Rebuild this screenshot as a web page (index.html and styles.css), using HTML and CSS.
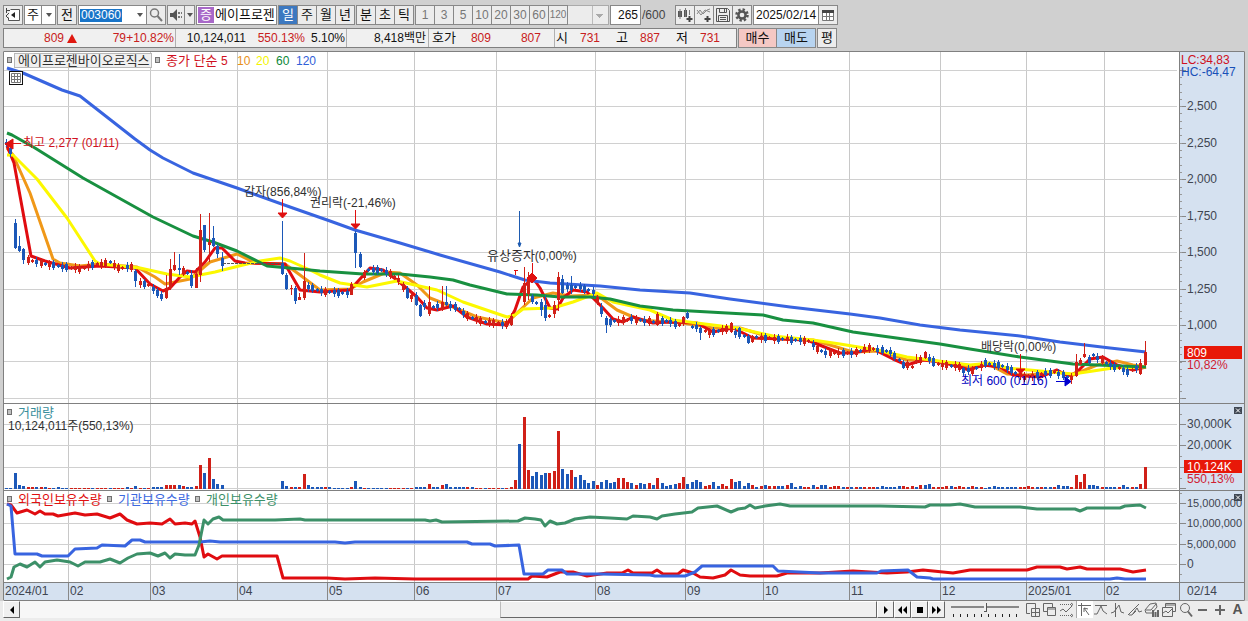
FILE: index.html
```html
<!DOCTYPE html>
<html lang="ko">
<head>
<meta charset="utf-8">
<title>에이프로젠바이오로직스 차트</title>
<link rel="stylesheet" href="styles.css">
</head>
<body>
<header class="toolbar">
  <button class="btn" aria-label="패널"><svg width="16" height="16" viewBox="0 0 16 16"><path d="M5.500 2.500h9v11h-11v-3" fill="#fff" stroke="#555"/><path d="M1 3.500h4M1.500 1v5M4 12l-3-3 3-3" stroke="#444" fill="none"/><path d="M10 5v6L6 8z" fill="#222"/></svg></button>
  <div class="group g-type"><button class="btn">주</button><button class="btn drop" aria-label="종류 선택"><i class="tri"></i></button></div>
  <button class="btn">전</button>
  <div class="group g-code">
    <input class="code" aria-label="종목코드" value="003060">
    <button class="btn drop flat" aria-label="종목 목록"><i class="tri"></i></button>
    <button class="btn" aria-label="검색"><svg width="16" height="16" viewBox="0 0 16 16"><circle cx="6.500" cy="6" r="4" fill="none" stroke="#777" stroke-width="1.500"/><path d="M9.500 9l4.500 5" stroke="#777" stroke-width="2"/></svg></button>
  </div>
  <div class="group g-sound"><button class="btn" aria-label="소리"><svg width="16" height="16" viewBox="0 0 16 16"><path d="M2 6h3l4-4v12l-4-4H2z" fill="#555"/><path d="M10 5h2v2h-2zM10 9h2v2h-2zM13 5h1v2h-1zM13 9h1v2h-1z" fill="#777"/></svg></button><button class="btn thin" aria-label="소리 설정"><i class="tri"></i></button></div>
  <div class="group g-name"><span class="tag">증</span><span class="name">에이프로젠</span></div>
  <div class="group g-cycle"><button class="btn on">일</button><button class="btn">주</button><button class="btn">월</button><button class="btn">년</button></div>
  <div class="group g-cycle"><button class="btn">분</button><button class="btn">초</button><button class="btn">틱</button></div>
  <div class="group g-min"><button class="btn">1</button><button class="btn">3</button><button class="btn">5</button><button class="btn">10</button><button class="btn">20</button><button class="btn">30</button><button class="btn">60</button><button class="btn small">120</button><select class="blank" aria-label="분 선택"><option></option></select></div>
  <div class="group g-count"><input class="count" aria-label="표시 개수" value="265"><span class="total">/600</span></div>
  <div class="group g-tools">
    <button class="btn" aria-label="차트 추가"><svg width="16" height="16" viewBox="0 0 16 16"><path d="M1 4h4v6H1zM7 3h3v7H7z" fill="#555"/><path d="M3 2v10M8.500 1v9M12.500 3v5" stroke="#777"/><path d="M12.500 9v6M9.500 12h6" stroke="#444" stroke-width="2"/></svg></button>
    <button class="btn" aria-label="지표 추가"><svg width="16" height="16" viewBox="0 0 16 16"><path d="M1 7l3-4 3 4 4-4 3-1M1 3l4 5 4-5 5 2" fill="none" stroke="#888"/><path d="M11.500 9v6M8.500 12h6" stroke="#444" stroke-width="2"/></svg></button>
    <button class="btn" aria-label="저장"><svg width="16" height="16" viewBox="0 0 16 16"><path d="M1.500 1.500h11l2 2v11h-13zM4.500 1.500v4h7v-4M3.500 14.500v-6h9v6M5 10.500h6M5 12.500h6M9.500 2v3" fill="none" stroke="#555"/></svg></button>
    <button class="btn" aria-label="설정"><svg width="16" height="16" viewBox="0 0 16 16"><circle cx="8" cy="8" r="5.500" fill="none" stroke="#555" stroke-width="2.500" stroke-dasharray="2.300 2"/><circle cx="8" cy="8" r="3.600" fill="none" stroke="#555" stroke-width="2.500"/></svg></button>
  </div>
  <div class="group g-date"><input class="date" aria-label="기준일" value="2025/02/14"><button class="btn" aria-label="달력"><svg width="14" height="14" viewBox="0 0 14 14"><path d="M1.500 2.500h11v10h-11zM1.500 8.500h11M5.500 5v7M8.500 5v7" fill="#fff" stroke="#777"/><path d="M1 2h12v3H1z" fill="#444"/></svg></button></div>
</header>

<section class="quote">
  <div class="quote-box">
    <div class="cell c-price red"><b class="n price">809</b><i class="up"></i><b class="n diff">79</b><b class="n rate">+10.82%</b></div>
    <div class="cell c-vol"><b class="n vol">10,124,011</b><b class="n red vrate">550.13%</b><b class="n turn">5.10%</b></div>
    <div class="cell c-amt"><b class="n">8,418백만</b></div>
    <div class="cell c-ask"><span>호가</span><b class="n red">809</b><b class="n red">807</b></div>
    <div class="cell c-ohl"><span>시</span><b class="n red">731</b><span>고</span><b class="n red">887</b><span>저</span><b class="n red">731</b></div>
  </div>
  <div class="group g-trade"><button class="btn buy">매수</button><button class="btn sell">매도</button></div>
  <button class="btn avg">평</button>
</section>

<main class="chart">
<svg class="plot" viewBox="3 51 1242 550">
  <rect x="3" y="51" width="1242" height="550" fill="#fff"/>
  <rect x="1180" y="52" width="64" height="548" class="axis-bg"/>
  <rect x="4" y="583" width="1240" height="17" class="axis-bg"/>
  <g id="grid"></g>
  <g id="volume" shape-rendering="crispEdges"></g>
  <g id="lines" fill="none"></g>
  <g id="candles" shape-rendering="crispEdges"></g>
  <g id="frame"></g>

  <g fill="#e01010" stroke="#e01010">
    <path d="M5 144l8-5v10z"/><path d="M13 143.500h8"/>
    <path d="M282.500 199v15"/><path d="M278 213h9l-4.500 5z"/>
    <path d="M355.500 210v16"/><path d="M351 224h9l-4.500 5z"/>
    <path d="M532.500 263v15"/><path d="M527 278l5-5 5 5-5 5z"/>
    <path d="M514 270.500h4M515.500 270v5"/>
    <path d="M1020.500 354v16"/><path d="M1016 369h9l-4.500 5z"/>
  </g>
  <g fill="#1e5bb0" stroke="#1e5bb0"><path d="M519.500 211v33"/><path d="M518 243h3l-1.500 4z"/></g>
  <g fill="#0000d0" stroke="#0000d0"><path d="M1056 381.500h9"/><path d="M1065 377v9l6-4.500z"/></g>

  <g class="mark"><rect x="7.500" y="57.500" width="4" height="5"/><rect x="155.500" y="57.500" width="4" height="5"/><rect x="7.500" y="409.500" width="4" height="5"/><rect x="7.500" y="496.500" width="4" height="5"/><rect x="107.500" y="496.500" width="4" height="5"/><rect x="195.500" y="496.500" width="4" height="5"/></g>
  <rect x="14.500" y="53.500" width="137" height="14" class="title-box"/>
  <g class="t">
    <text class="k" x="18" y="65">에이프로젠바이오로직스</text>
    <text class="k" x="166" y="65" fill="#d01020">종가 단순 <tspan class="d">5</tspan></text>
    <text x="237" y="65" fill="#e89018">10</text>
    <text x="256" y="65" fill="#f4f400">20</text>
    <text x="276" y="65" fill="#0c8838">60</text>
    <text x="296" y="65" fill="#3060d8">120</text>
    <text x="23" y="147" fill="#d01020">최고 2,277 (01/11)</text>
    <text x="244" y="196">감자(856,84%)</text>
    <text x="310" y="207">권리락(-21,46%)</text>
    <text x="487" y="260"><tspan class="k">유상증자</tspan>(0,00%)</text>
    <text x="981" y="351">배당락(0,00%)</text>
    <text x="961" y="385" fill="#0000c0">최저 600 (01/16)</text>
    <text class="k" x="18" y="417" fill="#3a8f9c">거래량</text>
    <text x="8" y="430">10,124,011주(550,13%)</text>
    <text class="k" x="18" y="504" fill="#e01010">외국인보유수량</text>
    <text class="k" x="118" y="504" fill="#3c68e0">기관보유수량</text>
    <text class="k" x="206" y="504" fill="#3c9068">개인보유수량</text>
  </g>
  <g class="t ax">
    <text x="1181" y="64" fill="#d01020">LC:34,83</text>
    <text x="1181" y="76" fill="#1850b8">HC:-64,47</text>
    <text x="1187" y="110">2,500</text><text x="1187" y="147">2,250</text><text x="1187" y="183">2,000</text><text x="1187" y="220">1,750</text><text x="1187" y="256">1,500</text><text x="1187" y="293">1,250</text><text x="1187" y="329">1,000</text>
    <rect x="1184" y="346" width="58" height="13" fill="#e81808"/><text x="1187" y="357" fill="#fff">809</text><text x="1187" y="369" fill="#d02030">10,82%</text>
    <text x="1187" y="428">30,000K</text><text x="1187" y="449">20,000K</text>
    <rect x="1184" y="460" width="58" height="13" fill="#e81808"/><text x="1187" y="471" fill="#fff">10,124K</text><text x="1187" y="483" fill="#d02030">550,13%</text>
    <text class="s" x="1187" y="507">15,000,000</text><text class="s" x="1187" y="527">10,000,000</text><text class="s" x="1187" y="548">5,000,000</text><text x="1187" y="568">0</text>
    <text x="5" y="595">2024/01</text><text x="70" y="595">02</text><text x="152" y="595">03</text><text x="239" y="595">04</text><text x="329" y="595">05</text><text x="416" y="595">06</text><text x="498" y="595">07</text><text x="597" y="595">08</text><text x="687" y="595">09</text><text x="765" y="595">10</text><text x="851" y="595">11</text><text x="942" y="595">12</text><text x="1028" y="595">2025/01</text><text x="1106" y="595">02</text><text x="1187" y="595">02/14</text>
  </g>
  <foreignObject x="9" y="71" width="14" height="14"><button class="grid-btn" aria-label="표 보기"><svg width="10" height="10" viewBox="0 0 10 10"><path d="M.5.5h9v9h-9zM0 3.500h10M0 6.500h10M3.500 0v10M6.500 0v10" fill="none" stroke="#777"/></svg></button></foreignObject>
  <foreignObject x="1234" y="407" width="8" height="7"><button class="close" aria-label="거래량 닫기"><svg width="8" height="7" viewBox="0 0 8 7"><path d="M2 1.500l4 4M6 1.500l-4 4" stroke="#fff"/></svg></button></foreignObject>
  <foreignObject x="1234" y="494" width="8" height="7"><button class="close" aria-label="보유수량 닫기"><svg width="8" height="7" viewBox="0 0 8 7"><path d="M2 1.500l4 4M6 1.500l-4 4" stroke="#fff"/></svg></button></foreignObject>
</svg>
</main>

<footer class="bottom">
  <button class="raised" aria-label="왼쪽으로"><svg width="8" height="8" viewBox="0 0 8 8"><path d="M6 0v8L2 4z"/></svg></button>
  <div class="track"><div class="thumb"></div></div>
  <div class="group play">
    <button class="raised" aria-label="오른쪽으로"><svg width="8" height="8" viewBox="0 0 8 8"><path d="M2 0v8l4-4z"/></svg></button>
    <button class="raised" aria-label="뒤로"><svg width="9" height="8" viewBox="0 0 9 8"><path d="M4 0v8L0 4zM9 0v8L5 4z"/></svg></button>
    <button class="raised" aria-label="정지"><svg width="8" height="8" viewBox="0 0 8 8"><path d="M1 1h6v6H1z"/></svg></button>
    <button class="raised" aria-label="앞으로"><svg width="9" height="8" viewBox="0 0 9 8"><path d="M0 0v8l4-4zM5 0v8l4-4z"/></svg></button>
  </div>
  <div class="speed"><input type="range" aria-label="속도" min="0" max="10" value="5"><div class="ticks"></div></div>
  <div class="tools">
    <button aria-label="창 추가"><svg viewBox="0 0 16 16"><path d="M5 11.500H1.500v-10h9V6M6.500 6.500h8v8h-8zM10.500 6v9M6 10.500h9"/></svg></button>
    <button aria-label="창 겹치기"><svg viewBox="0 0 16 16"><path d="M5 9.500H1.500v-8h9V5M5.500 5.500h8v8h-8zM6 7h8"/></svg></button>
    <button aria-label="영역"><svg viewBox="0 0 16 16"><path d="M1 2.500h11M1 13.500h11" stroke-dasharray="1 1"/><path d="M1 9l3-2 3 3 6-6M12 1l2 1.500L12 4M12 12l2 1.500-2 1.500"/></svg></button>
    <button class="sel" aria-label="십자선"><svg viewBox="0 0 16 16"><path d="M4.500 1v13M1 3.500h13M7 6l5 7M7 6v4M7 6l4 1"/></svg></button>
    <button aria-label="추세선"><svg viewBox="0 0 16 16"><path d="M2 3.500h12M1 12h3l4-8 2 5 4 3"/></svg></button>
    <button aria-label="세로선"><svg viewBox="0 0 16 16"><path d="M5.500 1v14M1 11l3-1 5-7 2 7 3 1"/></svg></button>
    <button aria-label="채널"><svg viewBox="0 0 16 16"><path d="M1 13l11-11M2 13h3l5-7 2 4 3-1M6 12l3-3"/></svg></button>
    <button aria-label="지우개"><svg viewBox="0 0 16 16"><path d="M1 8l5-6 6-1 1 4-5 6H2zM2 8h5l5-6"/><path d="M9 8v7M11.500 10v5M14 8v7" stroke-width="2"/></svg></button>
    <button aria-label="차트 묶음"><svg viewBox="0 0 16 16"><path d="M4.500 5V1.500h10v8H12M1.500 5.500h10v9h-10zM2 11l3-2 2 2 4-4M5 3h9"/></svg></button>
    <button aria-label="돋보기"><svg viewBox="0 0 16 16"><circle cx="7" cy="6" r="4.500"/><path d="M10 9.500l4 5" stroke-width="2"/></svg></button>
    <button aria-label="축소"><svg viewBox="0 0 16 16"><path d="M3 8h9" stroke-width="2"/></svg></button>
    <button aria-label="확대"><svg viewBox="0 0 16 16"><path d="M3 8h10M8 3v10" stroke-width="2"/></svg></button>
    <button class="letter">A</button>
  </div>
</footer>
<script src="chart.js"></script>
</body>
</html>
```
FILE: styles.css
```css
* { box-sizing: border-box; }
body {
  margin: 0;
  padding: 5px 3px 0;
  background: #d0d0d0;
  color: #111;
  font: 12px/16px "Liberation Sans", "Noto Sans CJK KR", sans-serif;
}
button, input, select { font: inherit; color: inherit; margin: 0; padding: 0; border-radius: 0; }
svg { display: block; }

.toolbar { display: flex; gap: 1px; height: 20px; white-space: nowrap; }
.group { display: flex; flex: none; }
.btn {
  display: flex; align-items: center; justify-content: center;
  flex: none; width: 20px; height: 20px; font-size: 13px;
  border: 1px solid #888; background: #ececec; overflow: hidden;
}
.group .btn + .btn { border-left: 0; width: 19px; }
.tri { border: 3px solid transparent; border-top: 4px solid #555; border-bottom: 0; }
.group .drop, .group .btn.drop { width: 14px; background: #fff; border-left: 0; }
.g-type { width: 32px; }
.g-type .btn:first-child { width: 18px; background: #fff; }
.g-code { width: 88px; }
.code { width: 55px; height: 20px; border: 1px solid #888; border-right: 0; background: linear-gradient(#1874c8, #1874c8) 1px 3px / 42px 13px no-repeat #fff; color: #fff; padding-left: 2px; }
.g-sound { width: 28px; }
.group .btn.thin { width: 10px; }
.g-sound .btn:first-child { width: 18px; }
.g-name { width: 81px; height: 20px; border: 1px solid #888; background: #fff; padding: 1px; overflow: hidden; font-size: 13px; line-height: 16px; }
.tag { width: 16px; height: 16px; background: #a868c8; color: #fff; text-align: center; margin-right: 1px; }
.g-cycle .on { background: #3c78c0; color: #fff; }
.g-min { color: #777; }
.g-min .btn { font-size: 12px; }
.g-min .small { font-size: 10px; }
.blank {
  appearance: none; width: 41px; height: 20px; border: 1px solid #aaa; border-left: 0;
  background: linear-gradient(225deg, #aaa 50%, transparent 50%) 28px 8px / 4px 4px no-repeat,
    linear-gradient(135deg, #aaa 50%, transparent 50%) 32px 8px / 4px 4px no-repeat,
    linear-gradient(#bbb, #bbb) 24px 0 / 1px 20px no-repeat #ececec;
}
.count { width: 31px; height: 20px; border: 1px solid #888; background: #fff; text-align: right; padding-right: 2px; }
.total { line-height: 20px; color: #444; width: 33px; padding-left: 1px; }
.g-date .date { width: 65px; height: 20px; border: 1px solid #888; border-right: 0; padding-left: 2px; background: #fff; }

.quote { display: flex; gap: 1px; margin-top: 3px; height: 20px; white-space: nowrap; }
.quote-box { display: flex; width: 734px; border: 1px solid #808080; background: #f0f0f0; line-height: 18px; }
.cell { display: flex; flex: none; border-right: 1px solid #b0b0b0; }
.cell:last-child { border-right: 0; }
.n { font-weight: 400; text-align: right; }
.red { color: #c82020; }
.c-price { width: 172px; }
.price { width: 60px; }
.up { align-self: center; margin-left: 3px; border: 5px solid transparent; border-top: 0; border-bottom: 9px solid #e01810; }
.diff { width: 49px; }
.rate { width: 48px; }
.c-vol { width: 171px; }
.vol { width: 70px; }
.vrate { width: 59px; }
.turn { width: 40px; }
.c-amt { width: 82px; justify-content: flex-end; padding-right: 2px; }
.c-ask { width: 126px; padding-left: 3px; }
.c-ask span, .c-ohl span { font-size: 13px; }
.c-ask .n { width: 50px; }
.c-ask .n:nth-child(2) { width: 35px; }
.c-ohl { width: 181px; padding-left: 1px; }
.c-ohl span { width: 12px; }
.c-ohl .n { width: 33px; margin-right: 16px; }
.group .btn.buy, .group .btn.sell { width: 39px; }
.group .btn.sell { background: #b8d4f0; }
.group .btn.buy { background: #f4c8c4; }

.chart { margin-top: 3px; }
.plot { width: 100%; height: auto; }
.axis-bg { fill: #d5e1f0; }
.t { fill: #303030; font-size: 12px; }
.t .k { font-size: 13px; }
.t .d { font-size: 12px; }
.t .s { font-size: 11px; }
.ax { fill: #404550; }
.mark { fill: #c0c0c0; stroke: #707070; }
.title-box { fill: #f0f0f0; stroke: #b8b8b8; }
.grid-btn { display: flex; align-items: center; justify-content: center; width: 14px; height: 14px; border: 1px solid #111; background: #fff; }
.close { display: block; width: 8px; height: 7px; border: 0; background: #404854; }

.bottom { display: flex; height: 20px; margin: 0 -3px; padding-left: 3px; background: #ececec; }
.raised { display: flex; align-items: center; justify-content: center; flex: none; width: 17px; height: 17px; border: 1px solid; border-color: #fff #666 #666 #fff; background: #f0f0f0; }
.track { display: flex; justify-content: flex-end; flex: 1; height: 17px; background: #f7f7f7; }
.thumb { width: 44%; border: 1px solid; border-color: #fff #666 #666 #bbb; background: #efefef; }
.speed { width: 72px; padding: 2px 2px 0; margin-left: 4px; }
.speed input { appearance: none; display: block; width: 100%; height: 9px; background: linear-gradient(#888, #888) 0 3px / 100% 2px no-repeat; }
.speed input::-webkit-slider-thumb { appearance: none; width: 3px; height: 9px; background: #f0f0f0; border-right: 1px solid #555; border-bottom: 1px solid #555; }
.ticks { height: 3px; margin: 2px 2px 0; background: repeating-linear-gradient(90deg, #222 0 1px, transparent 1px 7px); }
.tools { display: flex; margin-left: 4px; margin-right: 2px; }
.tools button { flex: none; width: 17px; height: 17px; border: 0; background: none; }
.tools svg { width: 16px; height: 16px; fill: none; stroke: #666; }
.tools .sel { background: #fff; border-left: 1px solid #aaa; }
.tools .letter { font: 700 14px/17px "Liberation Sans", sans-serif; color: #555; }
```
FILE: chart.js
```js
const NS = 'http://www.w3.org/2000/svg';
const RED = '#d02018', BLUE = '#1c58b8';
const X0 = 6, STEP = 4.313, COUNT = 265;
const byId = id => document.getElementById(id);
const barX = i => Math.round(X0 + STEP * i);

function add(parent, tag, attrs) {
  const el = document.createElementNS(NS, tag);
  for (const key in attrs) el.setAttribute(key, attrs[key]);
  parent.appendChild(el);
}
const path = (parent, d, stroke, width = 1) => add(parent, 'path', { d, stroke, 'stroke-width': width });

// grid and frame
const months = [68, 150, 237, 327, 414, 496, 595, 685, 763, 849, 940, 1026, 1104];
const levels = [70, 106, 143, 179, 216, 252, 289, 325, 361, 398, 424, 445, 467, 488, 503, 523, 544, 564];
path(byId('grid'), months.map(x => `M${x}.500 52V582`).join(''), '#c8c8c8');
path(byId('grid'), levels.map(y => `M4 ${y}.500H1177`).join(''), '#d0d0d0');
path(byId('frame'), months.map(x => `M${x}.500 583V600`).join(''), '#888');
path(byId('frame'), levels.map(y => `M1180 ${y}.500H1186`).join(''), '#888');
let minor = '';
for (let y = 77; y < 400; y += 7.3) minor += `M1180 ${Math.round(y)}.500h2`;
for (const y of [414, 435, 456, 478, 493, 513, 534, 554, 574]) minor += `M1180 ${y}.500h2`;
path(byId('frame'), minor, '#999');
add(byId('frame'), 'path', { d: 'M3.500 600V51.500H1244.500V600.500H3.500M4 403.500H1244M4 490.500H1244M4 582.500H1244M1179.500 52V600', fill: 'none', stroke: '#808080' });

// volume: bar index -> signed height, positive for a rise
const volume = {};
const setVolume = (start, list) => list.forEach((v, k) => { volume[start + k] = v; });
setVolume(0, [-1, -1, -16, -4, -3, 2, 2, -2, 2, -2, 1, -1, -2, -1, -1, 1, 1, 1, 1, 1, -1, 1, 1, 1, -1, 1, 1, 1, -2, 1, -3, 1, -1, 1, -2, -2, -2, 4, 4, 4, -4, 3, -2, -2, 3, 24, -16, 31, -10, -5, -4]);
setVolume(51, Array(13).fill(0));
setVolume(64, [-8, -3, 2, -2, 2, 15, -4, -2, -2, -2, 2, -2, -1, -1, -1, -1, 2, -8, -2, 1, -1, -1, -1, -1, -1, 1, 1, 1, 1, -1, 1, -2, -2, -2, 5, -2, -2, 4, -5, -2, -2, -2, -2, 2, -2, 1, 1, -1, 1, 1, 1, -1, 1, 2, 9, -45, 72, 19, -13, -17, -14, -16, 16, 18, 58, -20, -15, 19, -12, -14, -9, -6, -8, 4, -7, -9, -6, -7, 11, 11, 7, -6, 4, -6, -5, 6, -4, 11, -6, -3, -4, -5, 6, 12, -5, -7, -9, -7, 3, 4, -7, -3, 5, 3, 10, -7, -8, -3, -6, 4, -2, 3, -4, 3, 3, -3, -3, 4, -6, -2, -3, 2, 2, -4, 2, -4, -4, 2, 3, 3, -2, 2, -2, 2, -2, 2, 2, 2, -2, -3, -2, -2, -2, -3, 3, 2, 3, -2, 4, -4, -5, 2, 2, 2, 3, -3, 2, 3, 2, -2, 3, -2, 2, -1, -2, -3, -2, -2, -2, -2, -2, 2, 2, 3, 2, -2, 2, -2, -2, 2, -4, -3, -3, 2]);
Object.assign(volume, { 244: -4, 245: -3, 246: -3, 247: 2, 248: 14, 249: 7, 250: 15, 251: -4, 252: -4, 253: -3, 254: 2, 255: -2, 256: -2, 257: -2, 258: 2, 259: -4, 260: -2, 261: 2, 262: -2, 263: 5, 264: 22 });
for (let i = 0; i < COUNT; i++) {
  const v = volume[i] === undefined ? -2 : volume[i];
  const h = Math.abs(v);
  if (h) add(byId('volume'), 'rect', { x: barX(i) - 1, y: 489 - h, width: 3, height: h, fill: v > 0 ? RED : BLUE });
}

// candles: trend of the body centre, with the wide bars listed one by one
const trend = [[5, 260], [9, 264], [17, 269], [20, 265], [24, 262], [26, 268], [29, 267], [31, 283], [33, 285], [36, 297], [40, 269], [42, 273], [70, 287], [74, 292], [79, 293], [84, 270], [87, 270], [89, 274], [91, 280], [93, 293], [95, 300], [98, 308], [102, 304], [105, 309], [107, 316], [110, 321], [116, 324], [120, 290], [123, 303], [126, 316], [129, 287], [133, 287], [136, 292], [140, 322], [145, 319], [150, 322], [153, 321], [156, 325], [160, 327], [163, 333], [167, 329], [171, 336], [176, 338], [180, 339], [186, 341], [188, 349], [190, 353], [196, 353], [200, 348], [205, 352], [207, 360], [210, 367], [213, 357], [216, 364], [220, 366], [224, 371], [227, 363], [231, 366], [236, 377], [243, 372], [247, 378], [252, 355], [255, 363], [260, 372], [264, 364]];
const bars = {
  0: [-1, 139, 142, 145, 147], 1: [-1, 146, 148, 154, 157], 2: [-1, 219, 223, 248, 249], 3: [-1, 236, 246, 251, 252], 4: [-1, 248, 249, 260, 264],
  30: [-1, 269, 271, 281, 287], 36: [-1, 291, 294, 299, 301], 37: [1, 275, 288, 298, 299], 38: [1, 259, 269, 288, 290], 39: [1, 252, 265, 270, 271],
  40: [-1, 254, 268, 270, 275], 43: [-1, 270, 275, 286, 288], 44: [1, 268, 274, 288, 288], 45: [1, 214, 230, 275, 282], 46: [-1, 225, 225, 250, 252],
  47: [1, 213, 242, 245, 262], 48: [-1, 226, 238, 246, 247], 49: [-1, 244, 246, 254, 258], 50: [-1, 252, 258, 266, 271],
  64: [-1, 221, 263, 274, 275], 65: [-1, 273, 275, 289, 290], 66: [1, 285, 288, 289, 295], 67: [-1, 286, 288, 301, 304], 68: [1, 293, 297, 300, 300], 69: [1, 253, 281, 298, 300],
  80: [1, 282, 284, 295, 295], 81: [-1, 231, 233, 253, 268], 82: [-1, 252, 254, 267, 268], 93: [-1, 286, 288, 298, 299], 95: [-1, 292, 295, 305, 306], 96: [-1, 304, 305, 316, 317],
  98: [1, 286, 302, 314, 316], 101: [1, 286, 302, 310, 311], 102: [-1, 286, 302, 305, 306], 117: [1, 313, 316, 325, 326], 120: [1, 267, 283, 302, 305], 121: [1, 272, 278, 294, 300],
  124: [-1, 299, 302, 310, 316], 125: [-1, 295, 305, 318, 321], 127: [1, 301, 305, 314, 318], 128: [1, 272, 277, 300, 311], 129: [-1, 275, 279, 293, 294], 131: [-1, 276, 285, 290, 294],
  138: [-1, 303, 307, 314, 317], 139: [-1, 316, 318, 325, 333], 151: [1, 312, 314, 325, 326], 157: [1, 316, 317, 324, 326], 158: [-1, 311, 313, 318, 319], 161: [-1, 326, 328, 333, 340],
  168: [1, 322, 323, 332, 333], 170: [-1, 327, 328, 337, 339], 172: [-1, 334, 336, 343, 344], 173: [1, 335, 336, 342, 343], 208: [-1, 360, 362, 368, 369],
  211: [1, 354, 360, 363, 364], 213: [1, 351, 352, 358, 359], 215: [-1, 356, 358, 366, 367], 222: [-1, 367, 368, 373, 376], 247: [1, 373, 376, 380, 384], 248: [1, 354, 362, 376, 377], 249: [1, 358, 360, 364, 365],
  250: [1, 343, 354, 357, 358], 263: [1, 359, 363, 374, 375], 264: [1, 341, 352, 365, 366]
};
function level(i) {
  let k = 1;
  while (k < trend.length - 1 && trend[k][0] < i) k++;
  const [a, b] = [trend[k - 1], trend[k]];
  return a[1] + (b[1] - a[1]) * (i - a[0]) / (b[0] - a[0]);
}
for (let i = 0; i < COUNT; i++) {
  if ((i > 50 && i < 64) || i === 118 || i === 119) continue;
  let bar = bars[i];
  if (!bar) {
    const y = Math.round(level(i)), size = 1 + (i * 7) % 3;
    const side = volume[i] > 0 ? 1 : -1;
    bar = [side, y - size - 1 - (i * 5) % 3, y - size, y + size, y + size + 1 + (i * 11) % 3];
  }
  const color = bar[0] > 0 ? RED : BLUE, x = barX(i);
  add(byId('candles'), 'rect', { x, y: bar[1], width: 1, height: bar[4] - bar[1], fill: color });
  add(byId('candles'), 'rect', { x: x - 1, y: bar[2], width: 3, height: bar[3] - bar[2], fill: color });
}
add(byId('candles'), 'path', { d: 'M223 263.500H282', stroke: '#555', 'stroke-dasharray': '3 1' });

// moving averages and holdings
const lines = [
  ['#f09818', '7,148 13,155 30,193 53,259 60,263 80,266 100,264 137,267 155,277 165,284 190,279 210,262 237,254 255,263 285,264 300,275 320,290 350,289 363,282 387,272 400,273 417,285 430,298 453,307 477,317 507,323 517,313 533,298 553,293 570,296 597,295 617,310 640,320 683,323 713,328 740,328 763,335 780,339 813,340 840,348 853,352 880,351 907,360 930,360 967,367 990,365 1007,374 1027,375 1057,372 1073,375 1097,365 1117,361 1133,365 1146,367'],
  ['#e00c10', '7,146 14,163 31,256 45,261 70,268 100,266 135,268 150,284 163,291 170,288 180,277 187,271 195,272 205,262 215,248 222,248 235,261 245,263 285,264 300,290 320,292 350,290 370,268 383,270 397,280 417,297 427,308 437,310 453,306 467,317 487,324 507,325 515,310 523,287 533,278 540,288 550,308 557,309 563,298 573,290 587,292 603,308 613,319 623,322 633,317 653,323 670,322 697,323 713,332 733,328 753,338 807,340 827,348 840,353 853,353 873,349 893,359 907,365 923,360 940,362 957,366 969,370 983,365 1000,367 1013,375 1040,377 1057,370 1068,376 1077,372 1090,359 1103,357 1117,365 1133,370 1146,367'],
  ['#fcf800', '7,155 13,155 37,179 67,218 95,261 100,264 140,268 167,274 190,277 215,272 243,265 260,261 280,258 290,261 310,270 320,275 340,283 367,287 397,281 437,290 463,302 507,317 515,315 523,309 553,308 573,302 597,293 613,302 650,310 673,320 737,328 773,336 813,340 840,344 877,350 907,357 970,365 990,363 1007,368 1073,374 1113,368 1146,367'],
  ['#189040', '7,133 12,135 35,148 83,178 153,217 193,236 213,242 237,251 267,266 300,269 320,271 363,274 400,274 430,277 453,280 470,285 507,294 537,295 560,297 590,297 610,299 640,306 673,310 727,313 763,315 783,320 813,323 853,332 940,344 970,349 1020,357 1073,364 1146,367'],
  ['#3864e0', '7,68 23,73 62,90 80,96 112,121 135,139 150,150 163,158 193,173 237,188 290,207 330,221 355,230 400,243 440,255 500,272 525,280 550,283 600,286 640,290 690,293 730,299 790,307 850,314 880,318 920,325 960,330 1020,336 1060,342 1110,348 1146,352'],
  ['#e00c10', '7,504 11,505 17,513 27,510 35,514 40,511 45,514 53,514 58,516 75,513 85,515 97,514 110,518 120,514 127,520 137,524 150,523 162,524 170,519 175,524 185,523 192,524 195,521 200,537 204,557 208,554 217,559 222,556 277,556 283,578 327,578 345,579 375,578 415,579 528,579 532,576 547,577 560,572 573,572 587,576 607,573 622,573 628,570 633,573 652,573 657,570 663,574 678,574 683,570 693,573 700,577 713,578 725,575 731,570 740,575 750,576 777,576 787,573 820,573 853,571 887,573 907,572 923,570 953,573 970,570 1027,570 1037,567 1060,567 1067,569 1080,567 1087,569 1120,569 1133,572 1146,570'],
  ['#3864e0', '7,504 11,506 15,554 37,554 42,556 68,556 75,549 97,548 102,545 125,546 132,540 140,540 145,542 200,542 210,541 220,542 335,542 345,543 355,542 467,542 472,544 490,544 495,546 519,545 524,574 543,574 548,570 562,570 567,574 600,574 650,575 655,576 685,576 695,572 702,566 773,566 778,571 820,573 877,573 881,571 908,570 917,577 930,578 933,579 1110,579 1117,578 1125,579 1146,579'],
  ['#3c9068', '7,579 11,577 14,567 20,564 27,567 35,562 40,567 45,562 57,560 70,562 78,566 85,562 100,562 110,559 120,563 128,558 137,554 150,553 158,556 165,553 170,558 175,554 185,555 195,555 199,545 204,520 208,524 213,519 219,517 223,520 275,520 300,519 305,520 425,520 430,521 436,520 442,522 518,521 525,518 535,519 541,520 545,526 550,521 557,524 565,523 575,519 590,517 610,518 627,519 633,516 650,517 657,519 662,516 675,514 692,512 698,508 717,506 731,512 738,509 745,508 750,505 755,508 765,506 780,504 790,506 880,506 925,507 930,505 950,505 960,504 975,507 1020,507 1037,509 1075,509 1080,511 1087,508 1120,508 1125,506 1140,505 1146,508']
];
for (const [stroke, points] of lines) add(byId('lines'), 'polyline', { points, stroke, 'stroke-width': 3, 'stroke-linejoin': 'round' });
```
